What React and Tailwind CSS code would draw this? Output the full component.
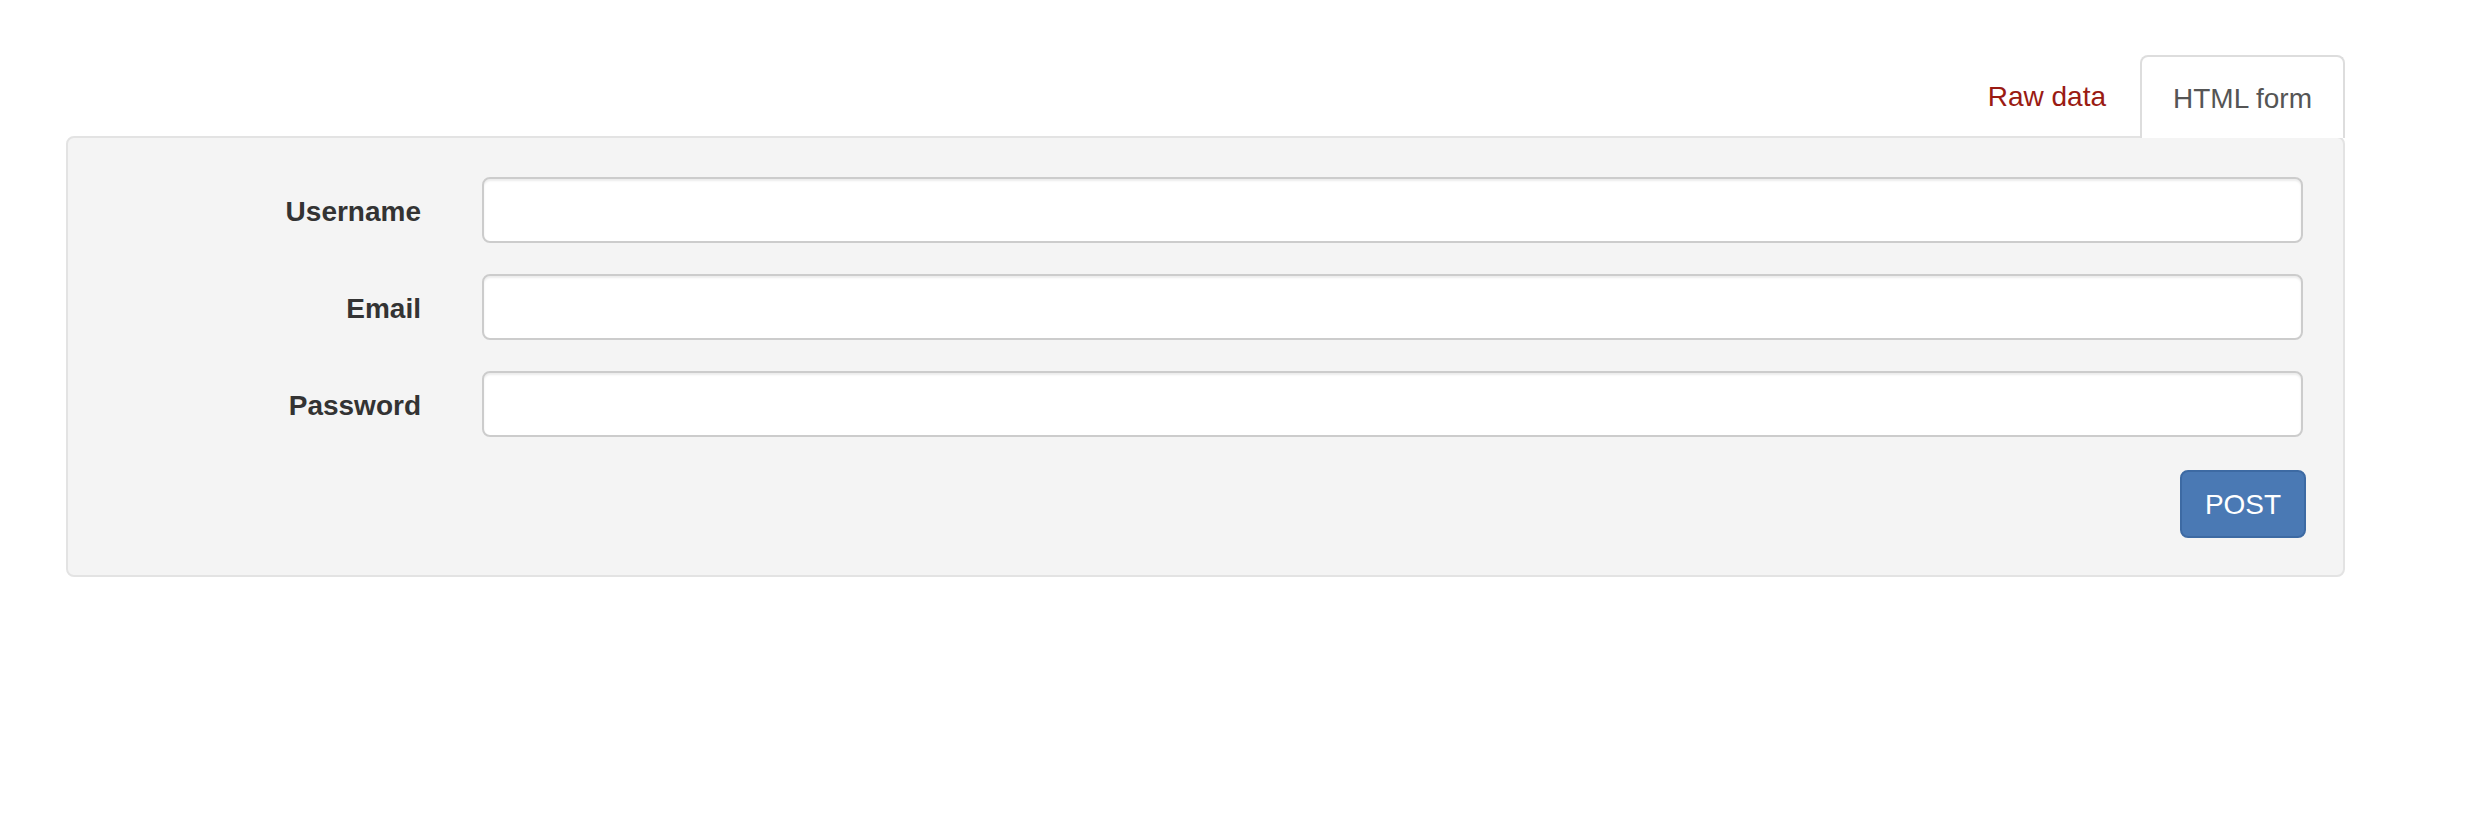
export default function App() {
  const fields = ["Username", "Email", "Password"];
  return (
    <div
      className="w-[2484px] h-[840px] bg-white text-[#333]"
      style={{ fontFamily: '"Liberation Sans", Arial, sans-serif' }}
    >
      <div className="ml-[66px] w-[2279px] pt-[55px] flex flex-col">
        <div className="flex justify-end h-[81px] items-start">
          <div className="h-[81px] px-[30px] mr-[4px] pt-[2px] flex items-center text-[28px] text-[#9a1b13] leading-none">
            Raw data
          </div>
          <div className="relative z-10 h-[83px] -mb-[2px] px-[31px] pt-[2px] flex items-center text-[28px] text-[#555] leading-none bg-white border-2 border-b-0 border-[#dddddd] rounded-t-[8px]">
            HTML form
          </div>
        </div>
        <div className="bg-[#f4f4f4] border-2 border-[#e3e3e3] rounded-[8px] pt-[39px] pb-[37px]">
          <div className="flex flex-col gap-[31px]">
            {fields.map((f) => (
              <div key={f} className="flex items-center pr-[40px]">
                <label className="w-[353px] pt-[3px] text-right font-bold text-[28px] leading-none text-[#333]">
                  {f}
                </label>
                <input
                  type={f === "Password" ? "password" : "text"}
                  className="ml-[61px] flex-1 h-[66px] bg-white border-2 border-[#cccccc] rounded-[8px] shadow-[inset_0_2px_2px_rgba(0,0,0,0.075)] outline-none px-[24px] text-[28px]"
                />
              </div>
            ))}
          </div>
          <div className="flex justify-end pr-[37px] mt-[33px]">
            <button className="w-[126px] h-[68px] pt-[2px] bg-[#4a79b4] border-2 border-[#3d6aa3] rounded-[8px] text-white text-[28px] leading-none">
              POST
            </button>
          </div>
        </div>
      </div>
    </div>
  );
}
